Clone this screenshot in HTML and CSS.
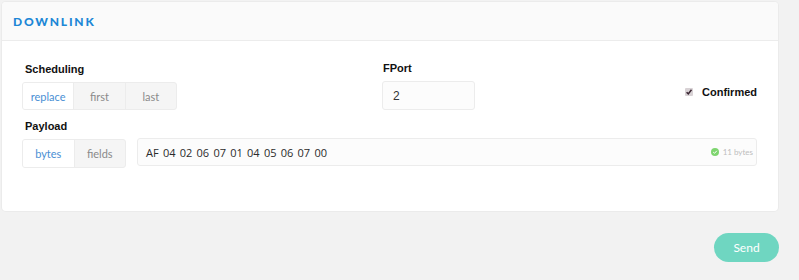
FILE: index.html
```html
<!DOCTYPE html>
<html>
<head>
<meta charset="utf-8">
<link rel="stylesheet" href="styles.css">
</head>
<body>
<div class="card">
  <div class="card-header"><h2 class="title">DOWNLINK</h2></div>
  <div class="card-body">
    <div class="row row-top">
      <div class="field field-sched">
        <div class="label">Scheduling</div>
        <div class="seg seg-3">
          <span class="seg-item active">replace</span>
          <span class="seg-item">first</span>
          <span class="seg-item">last</span>
        </div>
      </div>
      <div class="field field-port">
        <div class="label">FPort</div>
        <div class="input port-input">2</div>
      </div>
      <label class="confirm">
        <span class="checkbox"><svg viewBox="0 0 8 8" width="8" height="8"><path d="M1.6 4.2 L3.3 5.9 L6.5 1.8" fill="none" stroke="#3b2733" stroke-width="1.5"/></svg></span>
        <span class="confirm-text">Confirmed</span>
      </label>
    </div>
    <div class="field field-payload">
      <div class="label">Payload</div>
      <div class="row payload-row">
        <div class="seg seg-2">
          <span class="seg-item active">bytes</span>
          <span class="seg-item">fields</span>
        </div>
        <div class="input payload-input">
          <span class="payload-text">AF 04 02 06 07 01 04 05 06 07 00</span>
          <span class="bytes-info"><span class="dot"><svg viewBox="0 0 8 8" width="8" height="8"><circle cx="4" cy="4" r="4" fill="#7ed56f"/><path d="M2.2 4.1 L3.5 5.3 L5.8 2.8" fill="none" stroke="#fff" stroke-width="1"/></svg></span>11 bytes</span>
        </div>
      </div>
    </div>
  </div>
</div>
<div class="actions">
  <button class="send">Send</button>
</div>
</body>
</html>
```

FILE: styles.css
```css
html, body {
  margin: 0;
  padding: 0;
  background: #f2f2f2;
}
body {
  width: 799px;
  height: 280px;
  overflow: hidden;
  font-family: "Liberation Sans", Arial, sans-serif;
}
.card {
  margin: 2px 0 0 2px;
  width: 776px;
  height: 209px;
  background: #fff;
  border-radius: 4px;
  box-shadow: 0 0 0 1px #ebebeb;
  box-sizing: border-box;
  overflow: hidden;
}
.card-header {
  height: 39px;
  background: #fafafa;
  border-bottom: 1px solid #ececec;
  box-sizing: border-box;
  display: flex;
  align-items: center;
  padding-left: 11px;
}
.title {
  margin: 1px 0 0 0;
  font-family: Lato, sans-serif;
  font-weight: 900;
  font-size: 12px;
  letter-spacing: 1.8px;
  color: #1d87d6;
}
.card-body {
  padding: 21px 21px 0 20px;
}
.row {
  display: flex;
}
.row-top {
  align-items: flex-end;
}
.field-sched {
  width: 360px;
}
.label {
  font-size: 11px;
  font-weight: bold;
  color: #111;
  line-height: 13px;
  margin: 0 0 6px 3px;
}
.field-port .label {
  margin-left: 1px;
}
.seg {
  display: flex;
  height: 28px;
  border: 1px solid #ececec;
  border-radius: 3px;
  box-sizing: border-box;
  overflow: hidden;
  background: #f5f5f5;
}
.seg-3 { width: 155px; }
.seg-2 { width: 104px; height: 29px; }
.seg-item {
  flex: 1;
  display: flex;
  align-items: center;
  justify-content: center;
  font-family: Lato, sans-serif;
  font-size: 11px;
  color: #8a8a8a;
  border-left: 1px solid #ececec;
}
.seg-item:first-child {
  border-left: none;
}
.seg-item.active {
  background: #fff;
  color: #4a8fd4;
}
.input {
  border: 1px solid #ececec;
  border-radius: 3px;
  box-sizing: border-box;
  background: #fcfcfc;
  display: flex;
  align-items: center;
}
.port-input {
  width: 93px;
  height: 29px;
  padding-left: 10px;
  font-size: 12px;
  color: #333;
}
.confirm {
  margin-left: auto;
  margin-bottom: 12px;
  display: flex;
  align-items: center;
}
.checkbox {
  width: 8px;
  height: 8px;
  background: #d8d2d5;
  border-radius: 1px;
  display: flex;
  margin-right: 9px;
}
.confirm-text {
  font-size: 11px;
  font-weight: bold;
  color: #111;
}
.field-payload {
  margin-top: 10px;
}
.payload-row {
  align-items: flex-start;
}
.payload-input {
  margin-left: 11px;
  margin-top: -1px;
  flex: 1;
  height: 28px;
  padding: 0 3px 0 8px;
  justify-content: space-between;
}
.payload-text {
  font-family: "Open Sans", sans-serif;
  font-size: 11px;
  word-spacing: 1.4px;
  color: #2b2b2b;
}
.bytes-info {
  display: flex;
  align-items: center;
  font-family: Lato, sans-serif;
  font-size: 8px;
  color: #bdbdbd;
}
.dot {
  display: flex;
  margin-right: 4px;
}
.actions {
  display: flex;
  justify-content: flex-end;
  padding: 22px 20px 0 0;
}
.send {
  width: 65px;
  height: 29px;
  border: none;
  border-radius: 15px;
  background: #6fd6c1;
  color: #fff;
  font-family: Lato, sans-serif;
  font-size: 12px;
  padding: 0;
}
```
